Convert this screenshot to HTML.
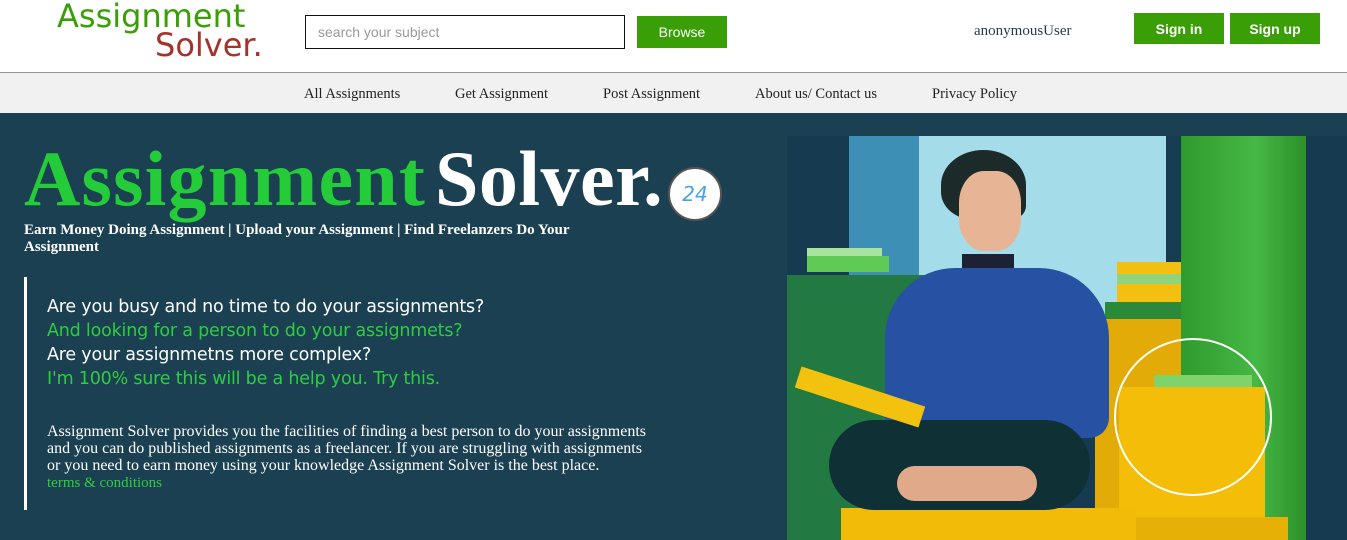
<!DOCTYPE html>
<html><head><meta charset="utf-8"><style>
*{margin:0;padding:0;box-sizing:border-box}
body{width:1347px;height:540px;overflow:hidden;background:#fff;position:relative;font-family:"Liberation Serif",serif}
.abs{position:absolute}
.logo{font-family:"Comic Sans MS","DejaVu Sans",sans-serif;font-size:32px;line-height:34px;white-space:nowrap}
.btn{background:#3a9e07;color:#fff;font-family:"Liberation Sans",sans-serif;font-size:14px;display:flex;align-items:center;justify-content:center}
.nav a{position:absolute;top:86px;font-size:14.5px;color:#222;text-decoration:none}
.comic{font-family:"Comic Sans MS","DejaVu Sans",sans-serif;font-size:17.5px;line-height:24px;white-space:nowrap;letter-spacing:-0.2px}
.big{position:absolute;top:134px;font-size:78px;font-weight:bold;white-space:nowrap;line-height:90px}
</style></head><body>
<div class="abs logo" style="left:57px;top:-1px;color:#3a9e07">Assignment</div>
<div class="abs logo" style="left:155px;top:28px;color:#a5322b">Solver.</div>
<div class="abs" style="left:305px;top:15px;width:320px;height:34px;border:1.5px solid #111;font-family:'Liberation Sans',sans-serif;font-size:14px;color:#999;padding:8px 12px">search your subject</div>
<div class="abs btn" style="left:637px;top:16px;width:90px;height:32px">Browse</div>
<div class="abs" style="left:974px;top:23px;font-size:15px;color:#1f3d4f">anonymousUser</div>
<div class="abs btn" style="left:1134px;top:13px;width:90px;height:31px;font-weight:bold">Sign in</div>
<div class="abs btn" style="left:1230px;top:13px;width:90px;height:31px;font-weight:bold">Sign up</div>
<div class="abs" style="left:0;top:72px;width:1347px;height:41px;background:#f1f1f1;border-top:1.5px solid #999"></div>
<div class="nav">
<a style="left:304px">All Assignments</a>
<a style="left:455px">Get Assignment</a>
<a style="left:603px">Post Assignment</a>
<a style="left:755px">About us/ Contact us</a>
<a style="left:932px">Privacy Policy</a>
</div>
<div class="abs" style="left:0;top:113px;width:1347px;height:427px;background:#1b4052"></div>
<!-- image -->
<div class="abs" style="left:787px;top:136px;width:560px;height:404px;background:#163a4f;overflow:hidden">
 <div class="abs" style="left:62px;top:0;width:70px;height:170px;background:#3d8fb6"></div>
 <div class="abs" style="left:132px;top:0;width:247px;height:200px;background:#a4dcea"></div>
 <div class="abs" style="left:379px;top:0;width:15px;height:250px;background:#173d52"></div>
 <div class="abs" style="left:394px;top:0;width:125px;height:404px;background:linear-gradient(90deg,#2f9a2e,#45b845 60%,#2d8f2a)"></div>
 <div class="abs" style="left:0;top:139px;width:143px;height:265px;background:#227a42"></div>
 <div class="abs" style="left:143px;top:150px;width:30px;height:254px;background:#1e6a3c"></div>
 <div class="abs" style="left:20px;top:112px;width:75px;height:8px;background:#a8e3a0"></div>
 <div class="abs" style="left:20px;top:120px;width:82px;height:16px;background:#5fca55"></div>
 <div class="abs" style="left:330px;top:126px;width:64px;height:12px;background:#f3bf10"></div>
 <div class="abs" style="left:330px;top:138px;width:64px;height:10px;background:#8fd37d"></div>
 <div class="abs" style="left:330px;top:148px;width:64px;height:18px;background:#f3bf10"></div>
 <div class="abs" style="left:318px;top:166px;width:76px;height:17px;background:#2b8a3a"></div>
 <div class="abs" style="left:308px;top:183px;width:86px;height:221px;background:#e3ab07"></div>
 <div class="abs" style="left:367px;top:239px;width:98px;height:13px;background:#7ed36a"></div>
 <div class="abs" style="left:332px;top:251px;width:146px;height:130px;background:#f4bd08"></div>
 <div class="abs" style="left:54px;top:372px;width:295px;height:40px;background:#f1bb08"></div>
 <div class="abs" style="left:349px;top:381px;width:152px;height:30px;background:#e7b007"></div>
 <div class="abs" style="left:154px;top:14px;width:85px;height:70px;border-radius:50% 50% 20% 40%;background:#1d2a2a"></div>
 <div class="abs" style="left:172px;top:35px;width:62px;height:80px;border-radius:40%;background:#e7b596"></div>
 <div class="abs" style="left:175px;top:118px;width:52px;height:42px;background:#1c2233"></div>
 <div class="abs" style="left:98px;top:132px;width:224px;height:170px;border-radius:70px 70px 20px 20px;background:#2751a3"></div>
 <div class="abs" style="left:42px;top:284px;width:261px;height:90px;border-radius:45px;background:#0f3135"></div>
 <div class="abs" style="left:8px;top:250px;width:130px;height:22px;background:#f2c20e;transform:rotate(18deg)"></div>
 <div class="abs" style="left:110px;top:330px;width:140px;height:35px;border-radius:20px;background:#e0a98a"></div>
 <div class="abs" style="left:327px;top:202px;width:158px;height:158px;border:2px solid #fff;border-radius:50%"></div>
</div>
<div class="big" style="left:24px;color:#25cc3a;letter-spacing:1.2px">Assignment</div>
<div class="big" style="left:435px;color:#fff;letter-spacing:0.5px">Solver.</div>
<div class="abs" style="left:668px;top:167px;width:54px;height:54px;border-radius:50%;background:#fff;border:2px solid #555;font-family:'Comic Sans MS','DejaVu Sans',sans-serif;font-style:italic;color:#4aa3e8;font-size:20px;display:flex;align-items:center;justify-content:center">24</div>
<div class="abs" style="left:24px;top:222px;width:600px;color:#fff;font-weight:bold;font-size:15px;line-height:17px">Earn Money Doing Assignment | Upload your Assignment | Find Freelanzers Do Your Assignment</div>
<div class="abs" style="left:24px;top:277px;width:3px;height:233px;background:#fff"></div>
<div class="abs comic" style="left:47px;top:295px">
<div style="color:#fff">Are you busy and no time to do your assignments?</div>
<div style="color:#2ecc40">And looking for a person to do your assignmets?</div>
<div style="color:#fff">Are your assignmetns more complex?</div>
<div style="color:#2ecc40">I'm 100% sure this will be a help you. Try this.</div>
</div>
<div class="abs" style="left:47px;top:423px;width:610px;color:#fff;font-size:16px;line-height:17px">Assignment Solver provides you the facilities of finding a best person to do your assignments and you can do published assignments as a freelancer. If you are struggling with assignments or you need to earn money using your knowledge Assignment Solver is the best place.<br><span style="color:#2ecc40;font-size:15px">terms &amp; conditions</span></div>
</body></html>
